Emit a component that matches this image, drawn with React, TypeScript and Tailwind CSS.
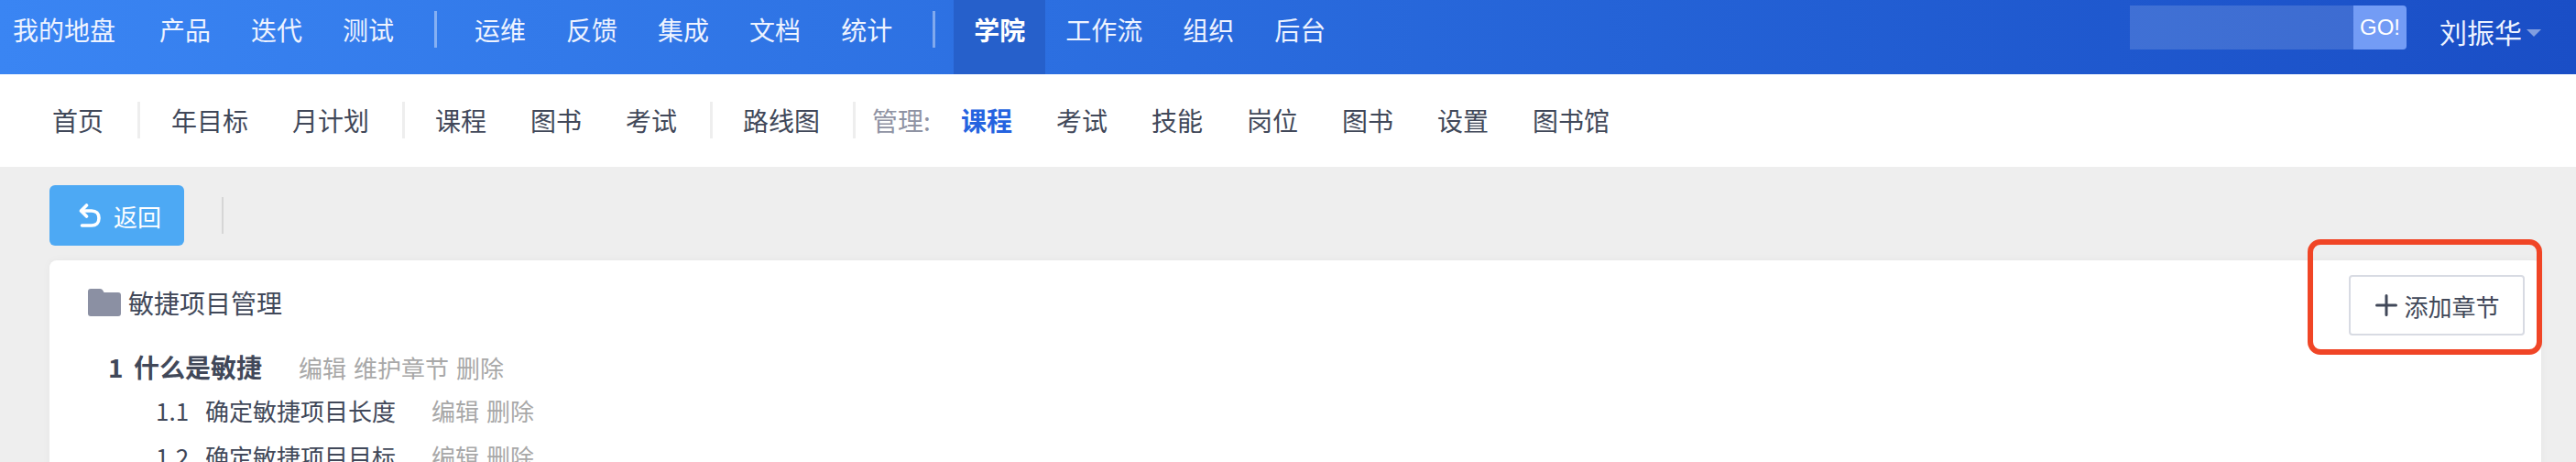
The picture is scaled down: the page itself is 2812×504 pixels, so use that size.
import React from 'react';

const cjk = "font-['PingFang_SC','Noto_Sans_CJK_SC','Liberation_Sans',sans-serif]";

const TopItem: React.FC<{ label: string; active?: boolean }> = ({ label, active }) => (
  <a
    className={
      active
        ? 'h-full px-[22px] bg-[#2660cb] font-bold text-white pt-[11px] leading-[42px]'
        : 'h-full px-[22px] text-[#eef3ff] pt-[11px] leading-[42px]'
    }
  >
    {label}
  </a>
);

const TopDivider = () => <div className="w-[3px] h-[40px] mt-[12px] ml-[22px] mr-[19px] bg-white/40" />;

const SubItem: React.FC<{ label: string; active?: boolean }> = ({ label, active }) => (
  <a className={active ? 'px-6 font-bold text-[#2563e0]' : 'px-6 text-[#414859]'}>{label}</a>
);

const SubDivider = () => <div className="w-[3px] h-[40px] ml-[12px] mr-[9px] bg-[#eeeeee]" />;

const Actions: React.FC<{ items: string[] }> = ({ items }) => (
  <span className="flex gap-2 text-[26px] text-[#a8a8a8]">
    {items.map((item) => (
      <a key={item}>{item}</a>
    ))}
  </span>
);

const App: React.FC = () => {
  return (
    <div className={`relative w-[2812px] h-[504px] overflow-hidden bg-[#eeeeee] ${cjk}`}>
      <div className="flex h-[81px] pl-[14px] pr-[38px] text-[28px] bg-linear-to-r from-[#3a85f3] to-[#1a4ec6]">
        <a className="h-full pr-[26px] text-[#eef3ff] pt-[11px] leading-[42px]">我的地盘</a>
        <TopItem label="产品" />
        <TopItem label="迭代" />
        <TopItem label="测试" />
        <TopDivider />
        <TopItem label="运维" />
        <TopItem label="反馈" />
        <TopItem label="集成" />
        <TopItem label="文档" />
        <TopItem label="统计" />
        <TopDivider />
        <div className="w-px" />
        <TopItem label="学院" active />
        <TopItem label="工作流" />
        <TopItem label="组织" />
        <TopItem label="后台" />
        <div className="ml-auto flex items-start pt-[6px]">
          <div className="w-[244px] h-[48px] bg-white/15" />
          <button className="w-[58px] h-[48px] rounded-r-[4px] bg-[#739cf5] text-white text-[24px] font-['Liberation_Sans',sans-serif]">
            GO!
          </button>
          <span className="ml-[36px] text-[30px] leading-[56px] text-[#eef3ff]">刘振华</span>
          <span className="ml-[5px] mt-[26px] border-x-[8px] border-t-[8px] border-x-transparent border-t-white/45" />
        </div>
      </div>

      <div className="flex items-center h-[101px] pl-[33px] pb-[2px] bg-white text-[28px]">
        <SubItem label="首页" />
        <div className="w-[3px] h-[40px] ml-[13px] mr-[10px] bg-[#eeeeee]" />
        <SubItem label="年目标" />
        <SubItem label="月计划" />
        <SubDivider />
        <SubItem label="课程" />
        <SubItem label="图书" />
        <SubItem label="考试" />
        <SubDivider />
        <SubItem label="路线图" />
        <div className="w-[3px] h-[40px] ml-[12px] bg-[#eeeeee]" />
        <span className="ml-[18px] mr-[9px] text-[#8f93a3]">管理:</span>
        <SubItem label="课程" active />
        <SubItem label="考试" />
        <SubItem label="技能" />
        <SubItem label="岗位" />
        <SubItem label="图书" />
        <SubItem label="设置" />
        <SubItem label="图书馆" />
      </div>

      <div className="flex items-center gap-[41px] ml-[54px] mt-[20px]">
        <button className="flex items-center gap-[14px] w-[147px] h-[66px] pl-[32px] rounded-[6px] bg-[#4da9f4] text-[26px] text-white">
          <svg width="24" height="26" viewBox="0 0 24 26" fill="none" stroke="currentColor" strokeWidth="3.6">
            <path d="M8.5 2 L2.5 8 L8.5 14" strokeLinejoin="round" strokeLinecap="round" />
            <path d="M3 8 H14 C19 8 22 11 22 16 C22 21 19 24 14 24 H3.5" strokeLinecap="round" />
          </svg>
          返回
        </button>
        <div className="w-[2px] h-[40px] bg-[#d6d6d6]" />
      </div>

      <div className="mt-[16px] ml-[54px] mr-[38px] h-[300px] rounded-t-[8px] bg-white shadow-[0_0_10px_rgba(0,0,0,0.04)] relative">
        <div className="flex items-start justify-between pt-[16px] pl-[42px] pr-[18px]">
          <div className="flex items-center gap-[8px] mt-[12px] text-[28px] leading-[36px] text-[#414859]">
            <svg width="36" height="30" viewBox="0 0 36 30" fill="#8b90a3">
              <path d="M3 0 H13 C15 0 16 1 17 3 L17.5 4 H33 C35 4 36 5 36 7 V27 C36 29 35 30 33 30 H3 C1 30 0 29 0 27 V3 C0 1 1 0 3 0 Z" />
            </svg>
            敏捷项目管理
          </div>
          <button className="flex items-center justify-center gap-[7px] w-[192px] h-[66px] pl-[2px] rounded-[4px] border-2 border-[#d8dbe3] bg-white text-[26px] text-[#414859]">
            <svg width="24" height="24" viewBox="0 0 24 24" stroke="currentColor" strokeWidth="3" strokeLinecap="round">
              <path d="M12 1.5 V22.5 M1.5 12 H22.5" />
            </svg>
            添加章节
          </button>
        </div>

        <div className="mt-[11px] pl-[64px] text-[#414859]">
          <div className="flex items-center h-[46px]">
            <span className="w-[28px] text-[28px] font-bold">1</span>
            <span className="text-[28px] font-bold">什么是敏捷</span>
            <span className="w-[40px]" />
            <Actions items={['编辑', '维护章节', '删除']} />
          </div>
          <div className="flex items-center h-[48px] text-[26px] pl-[52px]">
            <span className="w-[54px]">1.1</span>
            <span>确定敏捷项目长度</span>
            <span className="w-[39px]" />
            <Actions items={['编辑', '删除']} />
          </div>
          <div className="flex items-center h-[52px] text-[26px] pl-[52px]">
            <span className="w-[54px]">1.2</span>
            <span>确定敏捷项目目标</span>
            <span className="w-[39px]" />
            <Actions items={['编辑', '删除']} />
          </div>
        </div>
      </div>

      <div className="absolute left-[2519px] top-[261px] w-[256px] h-[126px] rounded-[14px] border-[6px] border-[#f04526]" />
    </div>
  );
};

export default App;
